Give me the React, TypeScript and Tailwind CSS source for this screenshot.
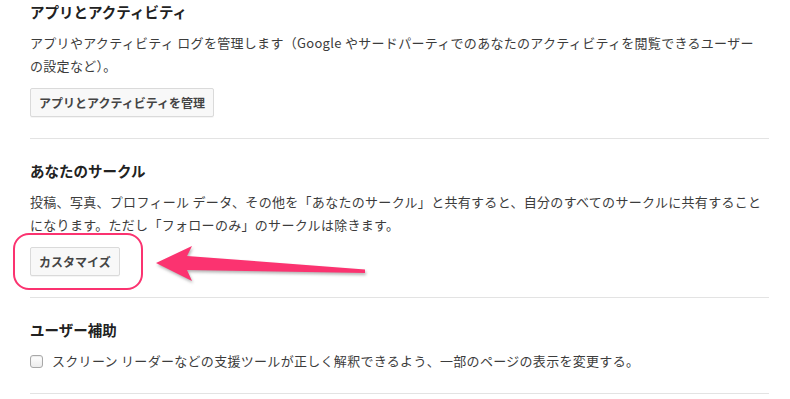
import React from 'react'

const FONT = "font-['Noto_Sans_CJK_JP',sans-serif]"

function Section({ title, children, first }: { title: string; children: React.ReactNode; first?: boolean }) {
  return (
    <section className={`${first ? 'pt-[2px]' : 'pt-[22px]'} pb-[21px] border-b border-[#e3e3e3]`}>
      <h2 className="h-[20px] leading-[20px] text-[14.5px] font-bold text-[#222]">{title}</h2>
      {children}
    </section>
  )
}

function Btn({ children }: { children: React.ReactNode }) {
  return (
    <button className="h-[29px] px-[8px] text-[12px] leading-[27px] font-bold text-[#444] bg-[#f8f8f8] border border-[#dadada] rounded-[2px] shadow-[0_1px_0_rgba(0,0,0,0.04)]">
      {children}
    </button>
  )
}

export default function App() {
  return (
    <div className={`${FONT} bg-white w-[790px] h-[399px] overflow-hidden`}>
      <div className="ml-[30px] w-[739px]">
        <Section title="アプリとアクティビティ" first>
          <p className="mt-[10px] text-[13px] leading-[22.5px] tracking-[0.3px] text-[#3c3c3c]">
            アプリやアクティビティ ログを管理します（Google やサードパーティでのあなたのアクティビティを閲覧できるユーザー
            <br />
            の設定など）。
          </p>
          <div className="mt-[11px]">
            <Btn>アプリとアクティビティを管理</Btn>
          </div>
        </Section>

        <Section title="あなたのサークル">
          <p className="mt-[10px] text-[13px] leading-[22.5px] tracking-[0.3px] text-[#3c3c3c]">
            投稿、写真、プロフィール データ、その他を「あなたのサークル」と共有すると、自分のすべてのサークルに共有することになります。ただし「フォローのみ」のサークルは除きます。
          </p>
          <div className="relative mt-[11px] h-[29px]">
            <Btn>カスタマイズ</Btn>
            {/* annotation ring */}
            <div className="absolute left-[-17px] top-[-14px] w-[130px] h-[57px] rounded-[16px] border-2 border-[#fb3370]" />
            {/* annotation arrow */}
            <svg
              className="absolute left-[120px] top-[-7px] drop-shadow-[1px_2px_1.5px_rgba(0,0,0,0.3)]"
              width="220"
              height="46"
              viewBox="0 0 220 46"
            >
              <polygon points="6,23 42,6 37,16 215,29.5 215,33 37,30 42,41" fill="#fb3370" />
            </svg>
          </div>
        </Section>

        <Section title="ユーザー補助">
          <label className="mt-[10px] flex items-center h-[22px] text-[13px] tracking-[0.3px] text-[#3c3c3c]">
            <span className="w-[13px] h-[13px] rounded-[3px] border border-[#a8a8a8] bg-gradient-to-b from-white to-[#ececec] shadow-[inset_0_1px_1px_rgba(0,0,0,0.08)]" />
            <span className="ml-[9px]">スクリーン リーダーなどの支援ツールが正しく解釈できるよう、一部のページの表示を変更する。</span>
          </label>
        </Section>
      </div>
    </div>
  )
}
